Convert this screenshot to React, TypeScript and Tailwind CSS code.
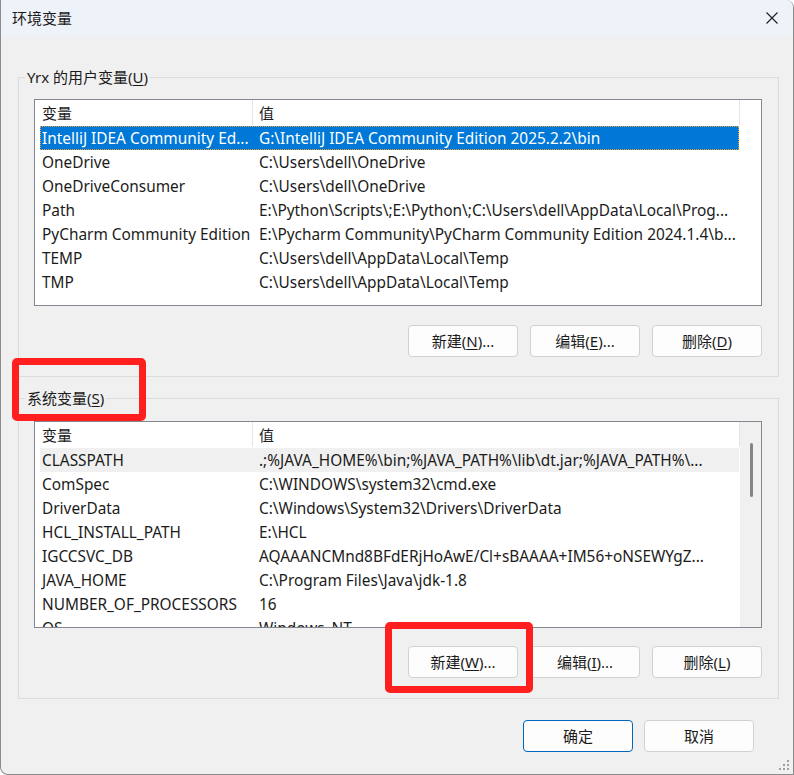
import React from "react";

const userVars: [string, string][] = [
  ["IntelliJ IDEA Community Ed...", "G:\\IntelliJ IDEA Community Edition 2025.2.2\\bin"],
  ["OneDrive", "C:\\Users\\dell\\OneDrive"],
  ["OneDriveConsumer", "C:\\Users\\dell\\OneDrive"],
  ["Path", "E:\\Python\\Scripts\\;E:\\Python\\;C:\\Users\\dell\\AppData\\Local\\Prog..."],
  ["PyCharm Community Edition", "E:\\Pycharm Community\\PyCharm Community Edition 2024.1.4\\b..."],
  ["TEMP", "C:\\Users\\dell\\AppData\\Local\\Temp"],
  ["TMP", "C:\\Users\\dell\\AppData\\Local\\Temp"],
];

const sysVars: [string, string][] = [
  ["CLASSPATH", ".;%JAVA_HOME%\\bin;%JAVA_PATH%\\lib\\dt.jar;%JAVA_PATH%\\..."],
  ["ComSpec", "C:\\WINDOWS\\system32\\cmd.exe"],
  ["DriverData", "C:\\Windows\\System32\\Drivers\\DriverData"],
  ["HCL_INSTALL_PATH", "E:\\HCL"],
  ["IGCCSVC_DB", "AQAAANCMnd8BFdERjHoAwE/Cl+sBAAAA+IM56+oNSEWYgZ..."],
  ["JAVA_HOME", "C:\\Program Files\\Java\\jdk-1.8"],
  ["NUMBER_OF_PROCESSORS", "16"],
  ["OS", "Windows_NT"],
];

const Btn = ({ label, hotkey, dots, primary }: { label: string; hotkey?: string; dots?: boolean; primary?: boolean }) => (
  <button
    className={
      "w-[110px] h-[32px] rounded-[4px] bg-[#fdfdfd] text-[15px] text-[#1b1b1b] flex items-center justify-center " +
      (primary ? "border border-[#0067c0]" : "border border-[#d1d1d1]")
    }
  >
    {label}
    {hotkey && (
      <>
        (<span className="underline underline-offset-2">{hotkey}</span>)
      </>
    )}
    {dots && "..."}
  </button>
);

const VarList = ({ rows, selected, hover, scroll }: { rows: [string, string][]; selected?: number; hover?: number; scroll?: boolean }) => (
  <div className="w-[728px] h-[207px] border border-[#828790] bg-white flex overflow-hidden">
    <div className="w-[705px] flex flex-col">
      <div className="h-[25px] shrink-0 flex text-[15px] text-[#1b1b1b]">
        <div className="w-[218px] pl-[7px] pt-[2px] border-r border-[#e5e5e5] flex items-center">变量</div>
        <div className="w-[487px] pl-[6px] pt-[2px] border-r border-[#e5e5e5] flex items-center">值</div>
      </div>
      <div className="mt-[1px] flex flex-col">
        {rows.map(([name, value], i) => (
          <div
            key={name}
            className={
              "ml-[5px] w-[699px] h-[24px] shrink-0 flex items-center pt-[2px] text-[15.4px] whitespace-nowrap border " +
              (i === selected
                ? "bg-[#0078d7] text-white border-dotted border-[#e8a13a]"
                : i === hover
                ? "bg-[#f0f0f0] text-[#1b1b1b] border-transparent"
                : "text-[#1b1b1b] border-transparent")
            }
          >
            <div className="w-[211px] pl-[1px] overflow-hidden">{name}</div>
            <div className="flex-1 pl-[7px] overflow-hidden">{value}</div>
          </div>
        ))}
      </div>
    </div>
    {scroll ? (
      <div className="w-[21px] bg-[#f0f0f0] flex justify-center">
        <div className="w-[3px] h-[54px] mt-[21px] ml-[1px] rounded-full bg-[#858585]" />
      </div>
    ) : (
      <div className="w-[21px]" />
    )}
  </div>
);

export default function App() {
  return (
    <div
      className="relative w-[794px] h-[775px] bg-[#f0f0f0] border-l border-b border-r border-[#8c8c8c] rounded-bl-[8px] rounded-tr-[8px] overflow-hidden flex flex-col text-[#1b1b1b]"
      style={{ fontFamily: '"Noto Sans", "Noto Sans CJK SC", sans-serif' }}
    >
      <div className="h-[36px] shrink-0 bg-[#eef2f9] flex items-center justify-between pl-[11px] pr-[14px]">
        <span className="text-[15px]">环境变量</span>
        <svg width="12" height="12" viewBox="0 0 12 12" className="mr-[1px]">
          <path d="M0.5 0.5 L11.5 11.5 M11.5 0.5 L0.5 11.5" stroke="#1b1b1b" strokeWidth="1.1" />
        </svg>
      </div>

      <div className="pl-[17px] flex flex-col">
        <fieldset className="mt-[31px] w-[761px] border border-[#dcdcdc] px-0 pt-[12px] pb-[19px]">
          <legend className="ml-[6px] px-[2px] text-[15px] leading-[20px]">
            Yrx 的用户变量(<span className="underline underline-offset-2">U</span>)
          </legend>
          <div className="px-[15px]">
            <VarList rows={userVars} selected={0} />
            <div className="mt-[19px] flex justify-end gap-[12px] pr-[1px]">
              <Btn label="新建" hotkey="N" dots />
              <Btn label="编辑" hotkey="E" dots />
              <Btn label="删除" hotkey="D" />
            </div>
          </div>
        </fieldset>

        <fieldset className="mt-[11px] w-[761px] border border-[#dcdcdc] px-0 pt-[13px] pb-[20px]">
          <legend className="ml-[6px] px-[2px] text-[15px] leading-[20px]">
            系统变量(<span className="underline underline-offset-2">S</span>)
          </legend>
          <div className="px-[15px]">
            <VarList rows={sysVars} hover={0} scroll />
            <div className="mt-[18px] flex justify-end gap-[12px] pr-[1px]">
              <Btn label="新建" hotkey="W" dots />
              <Btn label="编辑" hotkey="I" dots />
              <Btn label="删除" hotkey="L" />
            </div>
          </div>
        </fieldset>

        <div className="mt-[21px] w-[736px] flex justify-end gap-[11px]">
          <Btn label="确定" primary />
          <Btn label="取消" />
        </div>
      </div>

      {/* red annotation boxes */}
      <div className="absolute left-[11px] top-[358px] w-[134px] h-[63px] border-[7px] border-[#ff1f1f] rounded-[5px]" />
      <div className="absolute left-[384px] top-[622px] w-[148px] h-[71px] border-[7px] border-[#ff1f1f] rounded-[5px]" />

      <svg className="absolute right-[2px] bottom-[2px]" width="12" height="12" viewBox="0 0 12 12">
        <g fill="#a0a0a0">
          <rect x="8" y="0" width="2" height="2" />
          <rect x="4" y="4" width="2" height="2" />
          <rect x="8" y="4" width="2" height="2" />
          <rect x="0" y="8" width="2" height="2" />
          <rect x="4" y="8" width="2" height="2" />
          <rect x="8" y="8" width="2" height="2" />
        </g>
      </svg>
    </div>
  );
}
